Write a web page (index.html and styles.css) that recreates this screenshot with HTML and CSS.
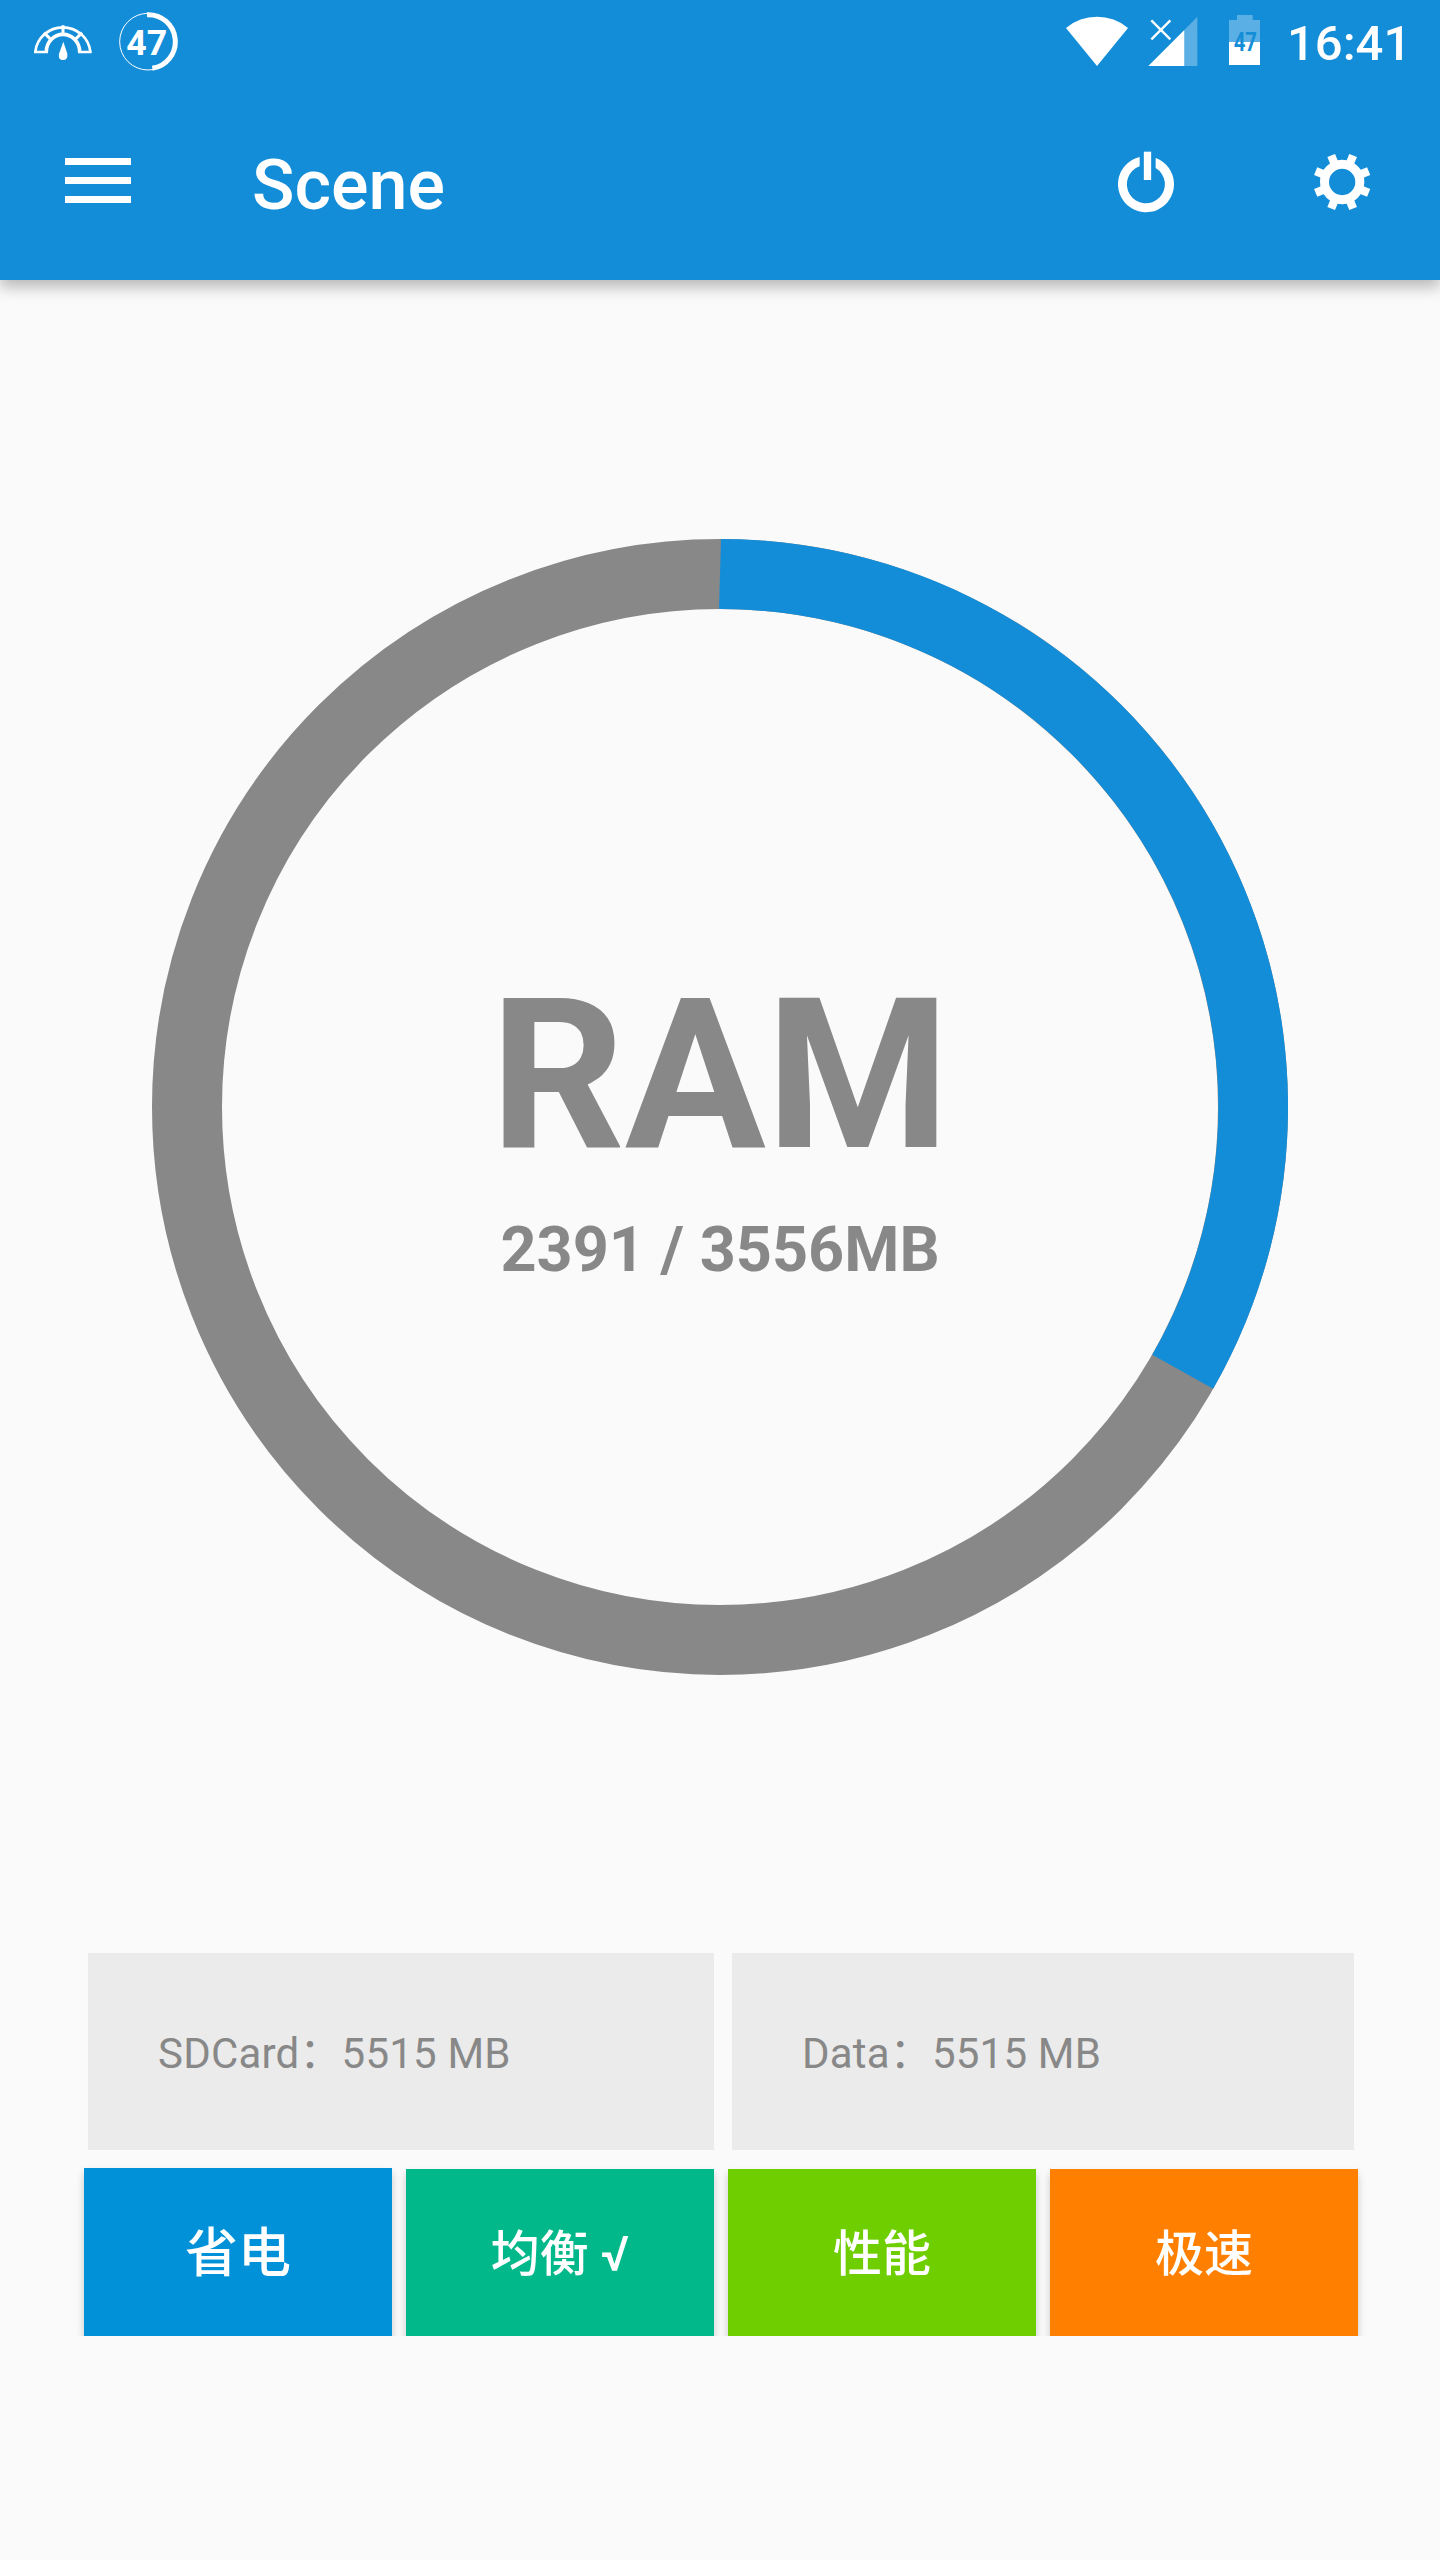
FILE: index.html
```html
<!DOCTYPE html>
<html lang="zh-CN">
<head>
<meta charset="utf-8">
<title>Scene</title>
<link rel="stylesheet" href="styles.css">
</head>
<body>
<header class="header">
  <div class="status">
    <svg class="gauge" width="60" height="84" viewBox="99 0 180 252">
      <g fill="none" stroke="#fff">
        <path d="M106 155A83 82 0 0 1 271 155" stroke-width="8"/>
        <path d="M139 155A50 52 0 0 1 239 155" stroke-width="11"/>
        <path d="M102 156H144M234 156H275" stroke-width="7"/>
        <path d="M189 76V106M132 98L152 118M246 98L226 118" stroke-width="9"/>
      </g>
      <path d="M190 125L202 161Q204 180 189 180Q174 180 177 161Z" fill="#fff"/>
    </svg>
    <svg class="badge" width="60" height="84" viewBox="354 0 180 252">
      <circle cx="444" cy="125" r="85" fill="none" stroke="#fff" stroke-width="3"/>
      <path d="M441 44A81 81 0 0 1 457 205" fill="none" stroke="#fff" stroke-width="15"/>
      <text x="440" y="164" class="badge-text" text-anchor="middle">47</text>
    </svg>
    <svg class="wifi" width="62" height="84" viewBox="78 0 186 252">
      <path d="M78 84A144 144 0 0 1 264 84L171 198Z" fill="#fff"/>
    </svg>
    <svg class="signal" width="50" height="84" viewBox="323 0 150 252">
      <path d="M432 90L471 50V198H432Z" fill="#fff" opacity=".3"/>
      <path d="M324 198L432 90V198Z" fill="#fff"/>
      <path d="M333 61L390 118M390 61L333 118" stroke="#fff" stroke-width="7"/>
    </svg>
    <svg class="battery" width="43" height="84" viewBox="549 0 129 252">
      <path d="M567 60H591V45H638V60H660V126H567Z" fill="#fff" opacity=".3"/>
      <path d="M567 126H660V195H567Z" fill="#fff"/>
      <text x="616" y="153" class="battery-text" text-anchor="middle" textLength="70" lengthAdjust="spacingAndGlyphs">47</text>
    </svg>
    <span class="clock">16:41</span>
  </div>
  <div class="appbar">
    <div class="menu"><i></i><i></i><i></i></div>
    <h1 class="title">Scene</h1>
    <svg class="power" width="60" height="64" viewBox="107 60 180 192">
      <path d="M178 81A84 84 0 1 0 226 84V114A57 57 0 1 1 178 109Z" fill="#fff"/>
      <path d="M190.500 65H212.500V150H190.500Z" fill="#fff"/>
    </svg>
    <svg class="gear" width="60" height="64" viewBox="696 60 180 192">
      <circle cx="786.500" cy="156" r="53" fill="none" stroke="#fff" stroke-width="27"/>
      <g stroke="#fff" stroke-width="25" transform="translate(786.500 156) rotate(22.500)">
        <path d="M0-60V-86M0 60V86M-60 0H-86M60 0H86"/>
        <path d="M0-60V-86M0 60V86M-60 0H-86M60 0H86" transform="rotate(45)"/>
      </g>
    </svg>
  </div>
</header>
<main class="main">
  <section class="ram">
    <svg class="ring" width="1136" height="1136" viewBox="152 539 1136 1136">
      <circle cx="720" cy="1107" r="533" fill="none" stroke="#888" stroke-width="70"/>
      <path d="M721 539A568 568 0 0 1 1213.200 1388.800L1152.300 1354.800A498 498 0 0 0 719 609Z" fill="#148dd8"/>
    </svg>
    <div class="reading">
      <div class="label">RAM</div>
      <div class="value">2391 / 3556MB</div>
    </div>
  </section>
  <section class="storage">
    <div class="card sd">SDCard：5515 MB</div>
    <div class="card data">Data：5515 MB</div>
  </section>
  <section class="modes">
    <button class="mode save">省电</button>
    <button class="mode balance">均衡 √</button>
    <button class="mode perf">性能</button>
    <button class="mode fast">极速</button>
  </section>
</main>
</body>
</html>
```
FILE: styles.css
```css
* { box-sizing: border-box; }
body {
  margin: 0;
  width: 1440px;
  height: 2560px;
  overflow: hidden;
  background: #fafafa;
  font-family: Roboto, "Noto Sans CJK SC", sans-serif;
}
svg { display: block; flex: none; }
.header {
  height: 280px;
  background: #148dd8;
  color: #fff;
  box-shadow: 0 7px 14px rgba(0, 0, 0, .27);
}
.status { display: flex; height: 84px; padding-left: 33px; }
.badge { margin-left: 25px; }
.badge-text { font-size: 107px; font-weight: 700; fill: #fff; }
.wifi { margin-left: 888px; }
.signal { margin-left: 20px; }
.battery { margin-left: 25px; }
.battery-text { font-size: 75px; font-weight: 700; fill: #148dd8; }
.clock {
  margin-left: 21px;
  font-size: 49px;
  font-weight: 500;
  line-height: 88px;
  white-space: nowrap;
}
.appbar { display: flex; height: 196px; padding-left: 65px; }
.menu {
  display: flex;
  flex-direction: column;
  gap: 12px;
  width: 66px;
  padding-top: 74px;
}
.menu i { height: 7px; background: #fff; }
.title {
  width: 865px;
  margin: 0;
  padding-left: 121px;
  font-size: 70px;
  font-weight: 500;
  line-height: 202px;
}
.power { margin: 66px 0 0 120px; }
.gear { margin: 66px 0 0 136px; }
.main { display: flex; flex-direction: column; }
.ram { display: grid; justify-items: center; height: 1136px; margin-top: 259px; }
.ring, .reading { grid-area: 1 / 1; }
.reading {
  padding-top: 413px;
  color: #888;
  font-weight: 700;
  text-align: center;
}
.label { font-size: 210px; line-height: 246px; }
.value { font-size: 63px; line-height: 74px; margin-top: 15px; }
.storage { display: flex; gap: 18px; margin: 278px 0 0 88px; }
.card {
  height: 197px;
  padding-left: 70px;
  background: #ebebeb;
  color: #888;
  font-size: 42px;
  letter-spacing: .2px;
  line-height: 201px;
  white-space: pre;
}
.sd { width: 626px; }
.data { width: 622px; }
.modes {
  display: flex;
  gap: 14px;
  height: 186px;
  padding: 19px 0 0 84px;
  overflow: hidden;
}
.mode {
  width: 308px;
  height: 167px;
  padding: 0 0 7px;
  border: 0;
  color: #fff;
  font-family: inherit;
  font-size: 49px;
  font-weight: 500;
  box-shadow: 0 5px 8px rgba(0, 0, 0, .2);
}
.save { height: 168px; margin-top: -1px; background: #0091d9; font-size: 53px; }
.balance { background: #00b88a; }
.perf { background: #6fce00; }
.fast { background: #ff8000; }
```
